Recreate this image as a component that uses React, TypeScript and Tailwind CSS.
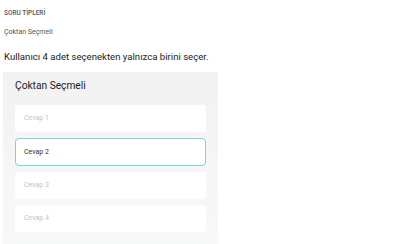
const answers = ["Cevap 1", "Cevap 2", "Cevap 3", "Cevap 4"];

const App = () => {
  return (
    <div className="w-[412px] h-[244px] overflow-hidden bg-white px-[3px] font-['Roboto',sans-serif]">
      <div className="pl-px pt-[9px] text-[6.5px] leading-[8px] font-medium text-[#555]">
        SORU TİPLERİ
      </div>
      <div className="pl-px mt-[11px] text-[7px] leading-[9px] text-[#555]">Çoktan Seçmeli</div>
      <p className="pl-px mt-[14px] text-[9.6px] leading-[12px] text-[#222]">
        Kullanıcı 4 adet seçenekten yalnızca birini seçer.
      </p>

      <div className="mt-[9px] w-[215px] h-[200px] bg-gradient-to-b from-[#f2f2f2] to-[#f8fafa] px-[12px] pt-[7px]">
        <h2 className="text-[10.2px] leading-[13px] text-[#222]">Çoktan Seçmeli</h2>
        <div className="mt-[13px] flex flex-col gap-[6px]">
          {answers.map((a, i) => (
            <div
              key={a}
              className={
                i === 1
                  ? "h-[28px] flex items-center rounded-[4px] border border-[#7fcfdc] bg-white pl-[8px] text-[7px] text-[#333]"
                  : "h-[27px] flex items-center rounded-[3px] bg-white pl-[9px] text-[7px] text-[#c4c4c4]"
              }
            >
              {a}
            </div>
          ))}
        </div>
      </div>
    </div>
  );
};

export default App;
